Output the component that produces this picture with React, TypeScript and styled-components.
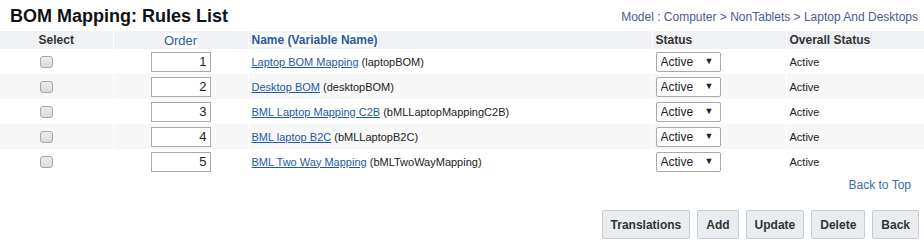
import React from 'react';
import styled, { createGlobalStyle } from 'styled-components';

const GlobalStyle = createGlobalStyle`
  body {
    margin: 0;
    background: #fff;
    font-family: "Liberation Sans", Arial, sans-serif;
    color: #222;
  }
`;

const Page = styled.div`
  width: 924px;
`;

const TitleBar = styled.div`
  display: flex;
  justify-content: space-between;
  align-items: flex-end;
  height: 31px;
  padding: 0 6px 0 10px;
  box-sizing: border-box;
`;

const Title = styled.h1`
  margin: 0 0 4px;
  font-size: 18px;
  font-weight: bold;
  color: #111;
`;

const Crumbs = styled.div`
  font-size: 12px;
  color: #4d5a8a;
  margin-bottom: 7px;
`;

const Table = styled.table`
  width: 100%;
  table-layout: fixed;
  border-collapse: collapse;
  font-size: 11px;
`;

const Th = styled.th<{ $w?: number; $center?: boolean }>`
  width: ${(p) => (p.$w ? `${p.$w}px` : 'auto')};
  box-sizing: border-box;
  height: 18px;
  padding: 0 3px;
  background: #eff1f5;
  border-left: 1px solid #fff;
  text-align: ${(p) => (p.$center ? 'center' : 'left')};
  font-size: 12px;
  font-weight: bold;
  color: #333;
  &:first-child { border-left: none; }
`;

const SortLink = styled.span<{ $bold?: boolean }>`
  background: #fbfcfd;
  color: #2b5a9b;
  font-size: ${(p) => (p.$bold ? '12px' : '13px')};
  font-weight: ${(p) => (p.$bold ? 'bold' : 'normal')};
`;

const Tr = styled.tr<{ $alt: boolean }>`
  height: 25px;
  background: ${(p) => (p.$alt ? '#f7f7f7' : '#fff')};
`;

const Td = styled.td`
  padding: 0 3px;
  border-left: 1px solid #fff;
  vertical-align: middle;
  white-space: nowrap;
  &:first-child { border-left: none; }
`;

const SelectCell = styled(Td)`
  padding-left: 40px;
`;

const OrderCell = styled(Td)`
  padding-left: 37px;
`;

const Check = styled.input`
  appearance: none;
  display: block;
  width: 13px;
  height: 12px;
  margin: 0;
  border: 1px solid #a8a8a8;
  border-radius: 3px;
  background: linear-gradient(#ececec, #dadada);
`;

const OrderInput = styled.input`
  display: block;
  width: 60px;
  height: 20px;
  box-sizing: border-box;
  border: 1px solid #a9a9a9;
  padding: 0 3px;
  text-align: right;
  font-family: "Liberation Sans", Arial, sans-serif;
  font-size: 13px;
  color: #222;
`;

const Link = styled.a`
  color: #1d5aa6;
  text-decoration: underline;
`;

const StatusBox = styled.div`
  position: relative;
  width: 65px;
  height: 20px;
`;

const StatusSelect = styled.select`
  appearance: none;
  width: 100%;
  height: 100%;
  box-sizing: border-box;
  border: 1px solid #a9a9a9;
  border-radius: 2px;
  background: #fff;
  padding: 0 0 0 4px;
  font-family: "Liberation Sans", Arial, sans-serif;
  font-size: 12px;
  color: #222;
`;

const Arrow = styled.span`
  position: absolute;
  right: 7px;
  top: 4px;
  font-size: 9px;
  color: #222;
  pointer-events: none;
`;

const TopRow = styled.div`
  display: flex;
  justify-content: flex-end;
  padding: 4px 13px 0 0;
  height: 33px;
  box-sizing: border-box;
`;

const TopLink = styled.a`
  font-size: 12px;
  color: #3a6cb2;
  text-decoration: none;
`;

const Actions = styled.div`
  display: flex;
  justify-content: flex-end;
  gap: 7px;
  padding: 3px 5px 0 0;
`;

const Button = styled.button`
  height: 29px;
  padding: 0 8px;
  border: 1px solid #c6ccd2;
  border-radius: 2px;
  background: #e9edf0;
  font-family: "Liberation Sans", Arial, sans-serif;
  font-size: 12px;
  font-weight: bold;
  color: #333;
`;

const rules = [
  { name: 'Laptop BOM Mapping', variable: 'laptopBOM' },
  { name: 'Desktop BOM', variable: 'desktopBOM' },
  { name: 'BML Laptop Mapping C2B', variable: 'bMLLaptopMappingC2B' },
  { name: 'BML laptop B2C', variable: 'bMLLaptopB2C' },
  { name: 'BML Two Way Mapping', variable: 'bMLTwoWayMapping' },
];

export default function App() {
  return (
    <Page>
      <GlobalStyle />
      <TitleBar>
        <Title>BOM Mapping: Rules List</Title>
        <Crumbs>Model : Computer &gt; NonTablets &gt; Laptop And Desktops</Crumbs>
      </TitleBar>
      <Table>
        <thead>
          <tr>
            <Th $w={113} $center>Select</Th>
            <Th $w={135} $center><SortLink>Order</SortLink></Th>
            <Th $w={404}><SortLink $bold>Name (Variable Name)</SortLink></Th>
            <Th $w={134}>Status</Th>
            <Th>Overall Status</Th>
          </tr>
        </thead>
        <tbody>
          {rules.map((r, i) => (
            <Tr key={r.variable} $alt={i % 2 === 1}>
              <SelectCell><Check type="checkbox" /></SelectCell>
              <OrderCell><OrderInput defaultValue={i + 1} /></OrderCell>
              <Td>
                <Link href="#">{r.name}</Link> ({r.variable})
              </Td>
              <Td>
                <StatusBox>
                  <StatusSelect defaultValue="Active">
                    <option>Active</option>
                    <option>Inactive</option>
                  </StatusSelect>
                  <Arrow>▼</Arrow>
                </StatusBox>
              </Td>
              <Td>Active</Td>
            </Tr>
          ))}
        </tbody>
      </Table>
      <TopRow>
        <TopLink href="#">Back to Top</TopLink>
      </TopRow>
      <Actions>
        <Button>Translations</Button>
        <Button>Add</Button>
        <Button>Update</Button>
        <Button>Delete</Button>
        <Button>Back</Button>
      </Actions>
    </Page>
  );
}
